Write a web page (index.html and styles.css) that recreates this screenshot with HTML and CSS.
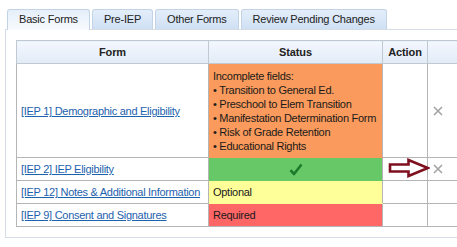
FILE: index.html
```html
<!DOCTYPE html>
<html>
<head>
<meta charset="utf-8">
<link rel="stylesheet" href="styles.css">
</head>
<body>
<div class="page">
  <div class="tabs">
    <div class="tab active">Basic Forms</div>
    <div class="tab">Pre-IEP</div>
    <div class="tab">Other Forms</div>
    <div class="tab">Review Pending Changes</div>
  </div>
  <div class="panel">
    <table class="forms">
      <colgroup>
        <col class="c-form"><col class="c-status"><col class="c-action"><col class="c-x">
      </colgroup>
      <thead>
        <tr><th>Form</th><th>Status</th><th>Action</th><th></th></tr>
      </thead>
      <tbody>
        <tr class="tall">
          <td class="form"><a href="#">[IEP 1] Demographic and Eligibility</a></td>
          <td class="status incomplete">
            <div>Incomplete fields:</div>
            <div>• Transition to General Ed.</div>
            <div>• Preschool to Elem Transition</div>
            <div>• Manifestation Determination Form</div>
            <div>• Risk of Grade Retention</div>
            <div>• Educational Rights</div>
          </td>
          <td></td>
          <td class="x"><svg width="10" height="10" viewBox="0 0 10 10"><path d="M1 1L9 9M9 1L1 9" stroke="#a3a3a3" stroke-width="1.6" fill="none"/></svg></td>
        </tr>
        <tr>
          <td class="form"><a href="#">[IEP 2] IEP Eligibility</a></td>
          <td class="status done"><svg class="check" width="14" height="13" viewBox="0 0 14 13"><path d="M1.5 7.2L5 11L12.5 1.5" stroke="#1d7a2d" stroke-width="2.6" fill="none" stroke-linejoin="round"/></svg></td>
          <td></td>
          <td class="x"><svg width="10" height="10" viewBox="0 0 10 10"><path d="M1 1L9 9M9 1L1 9" stroke="#a3a3a3" stroke-width="1.6" fill="none"/></svg></td>
        </tr>
        <tr>
          <td class="form"><a href="#">[IEP 12] Notes &amp; Additional Information</a></td>
          <td class="status optional">Optional</td>
          <td></td>
          <td></td>
        </tr>
        <tr>
          <td class="form"><a href="#">[IEP 9] Consent and Signatures</a></td>
          <td class="status required">Required</td>
          <td></td>
          <td></td>
        </tr>
      </tbody>
    </table>
  </div>
</div>
<svg class="arrow" width="42" height="20" viewBox="0 0 42 20"><path d="M2 6.5H20.5V2L40 10L20.5 18V13.5H2Z" fill="#ffffff" stroke="#7d0f1f" stroke-width="2.6" stroke-linejoin="miter"/></svg>
</body>
</html>
```

FILE: styles.css
```css
html, body {
  margin: 0;
  padding: 0;
  background: #ffffff;
  overflow: hidden;
}
body {
  font-family: "Liberation Sans", Arial, sans-serif;
  font-size: 11px;
  letter-spacing: -0.28px;
  color: #1a1a1a;
}
.page {
  padding: 9px 0 0 5px;
  width: 452px;
}
.tabs {
  display: flex;
  gap: 2px;
  margin-left: 2px;
  height: 20px;
  align-items: flex-end;
}
.tab {
  box-sizing: border-box;
  height: 20px;
  padding: 0 11px;
  line-height: 19px;
  font-size: 11px;
  letter-spacing: -0.2px;
  color: #222;
  border: 1px solid #c3d3e6;
  border-bottom: none;
  border-radius: 3px 3px 0 0;
  background: linear-gradient(#e4eefa, #cfe0f4);
}
.tab.active {
  height: 21px;
  margin-bottom: -1px;
  position: relative;
  z-index: 1;
  background: linear-gradient(#e5eefa, #f8fbfe);
}
.panel {
  border: 1px solid #d4dce6;
  border-right: none;
  padding: 10px 0 10px 10px;
  background: #fff;
  overflow: hidden;
}
.forms {
  border-collapse: collapse;
  table-layout: fixed;
  width: 465px;
}
.c-form { width: 192px; }
.c-status { width: 174px; }
.c-action { width: 45px; }
.c-x { width: 54px; }
.forms th, .forms td {
  border: 1px solid #b5b5b5;
  padding: 0 4px;
}
.forms th {
  height: 22px;
  font-size: 11px;
  letter-spacing: -0.1px;
  font-weight: bold;
  color: #222;
  text-align: center;
  background: linear-gradient(#f3f7fd, #e2ebf7);
  border-color: #c0c8d2;
}
.forms td {
  height: 22px;
  vertical-align: middle;
}
.forms tr.tall td {
  height: 84px;
  padding-top: 5px;
  padding-bottom: 4px;
}
.form a {
  color: #1d62ad;
  text-decoration: underline;
}
.status {
  line-height: 14px;
  color: #1a1a1a;
}
.incomplete { background: #fa9a5c; border-bottom-color: #fa9a5c !important; }
.done { background: #66c866; text-align: center; border-bottom-color: #66c866 !important; }
.optional { background: #ffff99; border-bottom-color: #ffff99 !important; }
.required { background: #ff6666; }
.check { display: block; margin: 1px auto 0; }
.x { padding-left: 5px !important; }
.x svg { display: block; }
.arrow {
  position: absolute;
  left: 388px;
  top: 158px;
}
```
